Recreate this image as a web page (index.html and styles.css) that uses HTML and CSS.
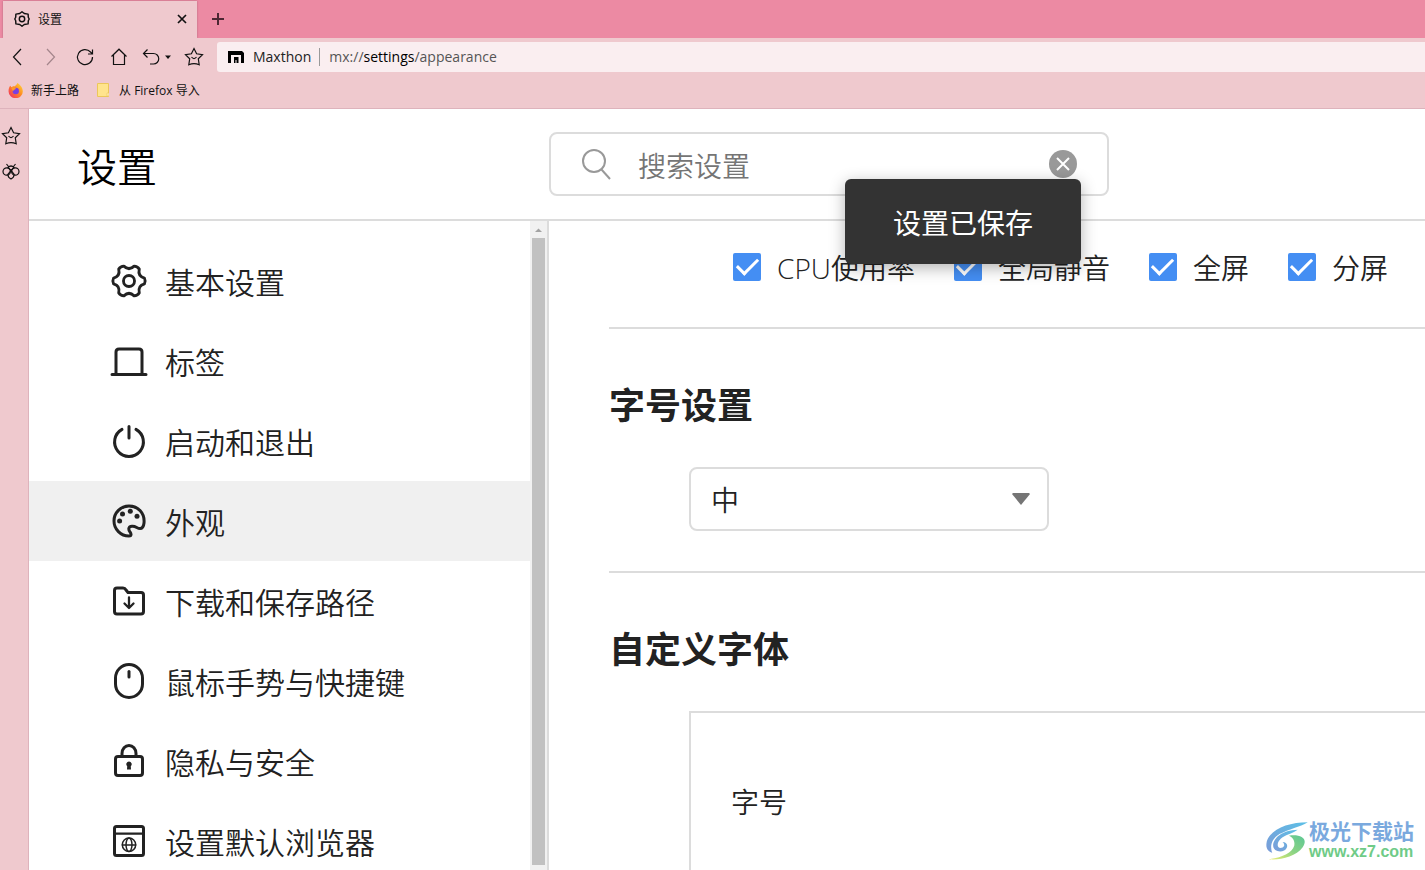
FILE: index.html
```html
<!DOCTYPE html>
<html lang="zh-CN">
<head>
<meta charset="utf-8">
<title>设置</title>
<link rel="stylesheet" href="styles.css">
</head>
<body>
<svg class="defs" width="0" height="0" aria-hidden="true">
  <symbol id="gear" viewBox="-1 -1 42 42"><path d="M36.2 16.9Q37.8 20 36.2 23.1Q29 25.2 30.8 32.5Q28.9 35.4 25.4 35.6Q20 30.4 14.6 35.6Q11.1 35.4 9.2 32.5Q11 25.2 3.8 23.1Q2.2 20 3.8 16.9Q11 14.8 9.2 7.5Q11.1 4.6 14.6 4.4Q20 9.6 25.4 4.4Q28.9 4.6 30.8 7.5Q29 14.8 36.2 16.9Z"/><circle cx="20" cy="20" r="5.8"/></symbol>
  <symbol id="star" viewBox="0 0 20 20"><path d="M10 1.5L12.6 6.8L18.5 7.7L14.3 11.8L15.2 17.7Q12.5 16.6 10 16.6Q7.500 16.600 4.800 17.700L5.700 11.800L1.500 7.700L7.400 6.800Z"/><path d="M7.500 10Q10 13.200 12.500 10"/></symbol>
</svg>

<header class="chrome">
  <div class="tabstrip">
    <div class="tab">
      <svg class="tab-icon" viewBox="0 0 20 20"><path d="M10 2L12.500 3.900L16.800 4.600L17 8L18 10L17 12L16.800 15.400L12.500 16.100L10 18L7.500 16.100L3.200 15.400L3 12L2 10L3 8L3.200 4.600L7.500 3.900Z"/><circle cx="10" cy="10" r="3"/></svg>
      <span class="tab-title">设置</span>
      <button class="plain" aria-label="关闭标签"><svg class="close" viewBox="0 0 10 10"><path d="M1 1L9 9M9 1L1 9"/></svg></button>
    </div>
    <button class="plain new-tab" aria-label="新建标签"><svg class="plus" viewBox="0 0 12 12"><path d="M6 0V12M0 6H12"/></svg></button>
  </div>
  <div class="toolbar">
    <button class="plain tool" aria-label="后退"><svg class="tool-icon" viewBox="0 0 20 20"><path d="M14 2L6.500 10L14 18"/></svg></button>
    <button class="plain tool dim" aria-label="前进"><svg class="tool-icon" viewBox="0 0 20 20"><path d="M6 2L13.500 10L6 18"/></svg></button>
    <button class="plain tool" aria-label="刷新"><svg class="tool-icon" viewBox="0 0 20 20"><path d="M17.500 10A7.500 7.500 0 1 1 15.500 5L17.500 7M17.500 2.500V7H13"/></svg></button>
    <button class="plain tool" aria-label="主页"><svg class="tool-icon" viewBox="0 0 20 20"><path d="M2.500 9.500L10 2.200L17.500 9.500M4.500 8V17.500H15.500V8"/></svg></button>
    <button class="plain tool undo" aria-label="撤销"><svg class="undo-icon" viewBox="0 0 36 20"><path d="M8.500 2.500L4.500 6.500L8.500 10.500M4.500 6.500H14.500A5.200 5.200 0 0 1 14.500 17H11"/><path class="fill" d="M26 8.500H32L29 12Z"/></svg></button>
    <button class="plain tool" aria-label="收藏"><svg class="tool-icon"><use href="#star"/></svg></button>
    <div class="address">
      <svg class="brand" viewBox="0 0 16 12"><path d="M0 0H14L16 2V12H13V4H3V12H0ZM6 6H10.500V12H8.500V9H7.500V12H6Z"/></svg>
      <span class="site">Maxthon</span>
      <span class="url">mx://<b>settings</b>/appearance</span>
    </div>
  </div>
  <nav class="bookmarks" aria-label="书签">
    <a class="bookmark" href="#start">
      <svg class="fox" viewBox="0 0 16 16">
        <defs><linearGradient id="fire" x1="1" y1="0" x2="0" y2="1"><stop offset="0" stop-color="#ffe23a"/><stop offset=".45" stop-color="#ff8a22"/><stop offset="1" stop-color="#f0246c"/></linearGradient></defs>
        <path fill="url(#fire)" d="M10 0C13 2 15.800 5 15.800 9A7.600 7.200 0 0 1 .6 9C.5 6 1.500 4 2.500 3L3.500 4.500C5 3.500 6 3.500 7.500 3.500C8.500 2 9.500 1.500 10 0Z"/>
        <circle cx="8.300" cy="8.500" r="3.400" fill="#7a3fe0"/><path fill="#ff9a28" d="M3.500 5C6 4 8 5 8.500 6.500C7 6.500 6.500 8 5 8.500Z"/>
      </svg>新手上路</a>
    <a class="bookmark folder-link" href="#import">
      <svg class="folder" viewBox="0 0 12 14"><path d="M.5.5H11.500V13.500H.5Z" fill="#ffe48d" stroke="#ecc75a"/><path d="M10 10H12V13H10Z" fill="#fff0b8" stroke="#ecc75a" stroke-width=".6"/></svg>从 Firefox 导入</a>
  </nav>
</header>

<div class="body">
  <aside class="rail">
    <button class="plain" aria-label="收藏夹"><svg class="rail-icon"><use href="#star"/></svg></button>
    <button class="plain" aria-label="扩展"><svg class="rail-icon" viewBox="0 0 20 20"><path d="M5.500 3L7.500 5.500M14.500 3L12.500 5.500M7 6.500Q10 3.500 13 6.500L10 9.500Z"/><ellipse cx="5.700" cy="10.500" rx="3.700" ry="3.700"/><ellipse cx="14.300" cy="10.500" rx="3.700" ry="3.700"/><path d="M10 9.500L6.800 13.500Q7 16.500 10 18Q13 16.500 13.200 13.500Z"/></svg></button>
  </aside>

  <div class="page">
    <header class="page-head">
      <h1 class="title">设置</h1>
      <form class="search">
        <svg class="search-icon" viewBox="0 0 32 32"><circle cx="14" cy="13" r="11"/><path d="M21.500 21.500L30 31"/></svg>
        <input class="search-input" type="text" placeholder="搜索设置" aria-label="搜索设置">
        <button class="plain" type="reset" aria-label="清除"><svg class="clear" viewBox="0 0 28 28"><circle cx="14" cy="14" r="14"/><path d="M8 8L20 20M20 8L8 20"/></svg></button>
      </form>
    </header>

    <div class="columns">
      <div class="side">
        <nav class="menu" aria-label="设置分类">
          <a class="item" href="#basic"><svg class="icon"><use href="#gear"/></svg>基本设置</a>
          <a class="item" href="#tabs"><svg class="icon" viewBox="0 0 40 40"><path d="M7 33V11Q7 8 10 8H30Q33 8 33 11V33M3 33.500H37"/></svg>标签</a>
          <a class="item" href="#launch"><svg class="icon" viewBox="0 0 40 40"><path d="M13 8.400A14.400 14.400 0 1 0 27 8.400M20 5.500V17"/></svg>启动和退出</a>
          <a class="item active" href="#appearance" aria-current="page"><svg class="icon" viewBox="0 0 40 40"><path d="M35 22C36 12 29 5 20 5A15 15 0 0 0 20 35C22.500 35 22.500 33 21 31C19 28 19.500 25.500 23 25.300C27 25 28 27.500 31 27.500C34 27.500 34.700 25 35 22Z"/><g class="fill"><circle cx="10.600" cy="20" r="2.500"/><circle cx="13.500" cy="13" r="2.500"/><circle cx="21.300" cy="10.200" r="2.500"/><circle cx="28" cy="15.300" r="2.500"/></g></svg>外观</a>
          <a class="item" href="#download"><svg class="icon" viewBox="0 0 40 40"><path d="M8 7H14Q16 7 17 9L19 11.500H32Q34.500 11.500 34.500 14V30.500Q34.500 33 32 33H8Q5.500 33 5.500 30.500V9.500Q5.500 7 8 7Z"/><path stroke-width="2.300" d="M20 16.500V26.500M15.500 22.500L20 27L24.500 22.500"/></svg>下载和保存路径</a>
          <a class="item" href="#mouse"><svg class="icon" viewBox="0 0 40 40"><rect x="6.500" y="3.500" width="27" height="33" rx="13.500"/><path d="M20 10.500V16"/></svg>鼠标手势与快捷键</a>
          <a class="item" href="#privacy"><svg class="icon" viewBox="0 0 40 40"><rect x="6.500" y="15.500" width="27" height="19" rx="2.500"/><path d="M13 15V12.500A7 8 0 0 1 27 12.500V15"/><path class="fill" d="M20 20.500A2.700 2.700 0 0 1 21.800 25.200L22 28.500H18L18.200 25.200A2.700 2.700 0 0 1 20 20.500Z"/></svg>隐私与安全</a>
          <a class="item" href="#default"><svg class="icon" viewBox="0 0 40 40"><rect x="5.500" y="5.500" width="29" height="29" rx="2"/><path stroke-width="2.200" d="M5.500 12.700H34.500"/><g stroke-width="1.500"><circle cx="20" cy="23.700" r="6.700"/><ellipse cx="20" cy="23.700" rx="3" ry="6.700"/><path d="M13.300 24H26.700"/></g></svg>设置默认浏览器</a>
        </nav>
        <div class="scrollbar" aria-hidden="true">
          <svg class="arrow" viewBox="0 0 17 17"><path d="M5 11L8.500 7.500L12 11Z"/></svg>
          <div class="thumb"></div>
        </div>
      </div>

      <main class="main">
        <section class="checks">
          <label class="check"><input class="box" type="checkbox" checked>CPU使用率</label>
          <label class="check"><input class="box" type="checkbox" checked>全局静音</label>
          <label class="check"><input class="box" type="checkbox" checked>全屏</label>
          <label class="check"><input class="box" type="checkbox" checked>分屏</label>
        </section>
        <section class="section">
          <h2 class="heading" id="size-label">字号设置</h2>
          <div class="select">
            <select class="select-box" aria-labelledby="size-label"><option>中</option></select>
            <svg class="caret" viewBox="0 0 18 12"><path d="M1 0H17L18 1L9 12L0 1Z"/></svg>
          </div>
        </section>
        <section class="section">
          <h2 class="heading">自定义字体</h2>
          <div class="panel">字号</div>
        </section>
      </main>
    </div>
  </div>
</div>

<div class="toast" role="status">设置已保存</div>

<div class="watermark">
  <svg class="swirl" viewBox="74 56 140 128">
    <defs>
      <linearGradient id="blue" x1="1" y1="0" x2="0" y2="1"><stop offset="0" stop-color="#5cc0e6"/><stop offset="1" stop-color="#7b9bd8"/></linearGradient>
      <linearGradient id="green" x1="1" y1="0" x2="0" y2="1"><stop offset="0" stop-color="#5cc795"/><stop offset=".5" stop-color="#8bd384"/><stop offset="1" stop-color="#eeee70"/></linearGradient>
    </defs>
    <path fill="url(#blue)" d="M210 60C150 60 95 80 80 120C74 145 85 153 97 158C90 140 92 115 120 98C150 82 185 75 210 60Z"/>
    <path fill="url(#blue)" d="M178 84C130 85 100 110 100 135C100 150 120 158 135 150C150 142 147 123 130 123C140 132 135 142 122 142C110 140 112 120 130 108C145 98 163 95 178 84Z"/>
    <path fill="url(#green)" d="M150 103C190 98 212 113 194 140C172 170 120 182 86 178C130 172 160 158 167 135C170 118 162 108 150 103Z"/>
  </svg>
  <div class="mark-text"><strong class="mark-name">极光下载站</strong><span class="mark-url">www.xz7.com</span></div>
</div>
</body>
</html>
```
FILE: styles.css
```css
* { box-sizing: border-box; }
body {
  margin: 0;
  height: 100vh;
  display: flex;
  flex-direction: column;
  position: relative;
  overflow: hidden;
  background: #fff;
  color: #222;
  font-family: "Open Sans", "Noto Sans CJK SC", sans-serif;
}
svg { display: block; flex: none; fill: none; stroke: currentColor; }
a { color: inherit; text-decoration: none; }
.defs { position: absolute; }
.fill { fill: currentColor; stroke: none; }
.plain { border: 0; padding: 0; background: none; color: inherit; display: flex; align-items: center; justify-content: center; }

.chrome { background: #efc9ce; border-bottom: 1px solid #deb3bc; color: #111; }
.tabstrip { display: flex; height: 38px; padding: 1px 0 0 3px; background: #ec8aa3; }
.tab {
  display: flex;
  align-items: center;
  width: 194px;
  padding: 0 10px 2px;
  background: #efc9ce;
  box-shadow: 0 0 2px #b06a7d;
  clip-path: inset(-1px -2px 0 -2px);
}
.tab-icon { width: 18px; height: 18px; stroke-width: 1.6; stroke-linejoin: round; }
.tab-title { flex: 1; padding-left: 7px; font-size: 12px; }
.close { width: 10px; height: 10px; stroke-width: 1.7; }
.new-tab { width: 42px; padding-bottom: 2px; }
.plus { width: 12px; height: 12px; stroke-width: 2; color: #4d2733; }

.toolbar { display: flex; align-items: center; height: 38px; }
.tool { width: 34px; height: 30px; }
.tool-icon { width: 20px; height: 20px; stroke-width: 1.2; }
.dim { color: #a3858b; }
.undo { width: 41px; }
.undo-icon { width: 36px; height: 20px; stroke-width: 1.2; }
.address {
  flex: 1;
  display: flex;
  align-items: center;
  height: 30px;
  margin-left: 6px;
  padding-left: 11px;
  background: #faeef0;
  border-radius: 3px 0 0 3px;
  font-size: 14px;
}
.brand { width: 16px; height: 12px; fill: #000; stroke: none; }
.site { margin-left: 9px; padding-right: 8px; border-right: 1px solid #999; line-height: 18px; color: #222; }
.url { padding-left: 9px; line-height: 18px; color: #555; }
.url b { font-weight: 400; color: #000; }

.bookmarks { display: flex; align-items: center; height: 32px; padding: 0 8px 4px; font-size: 12px; }
.bookmark { display: flex; align-items: center; gap: 8px; }
.folder-link { margin-left: 18px; gap: 10px; }
.fox { width: 15px; height: 15px; stroke: none; }
.folder { width: 12px; height: 14px; stroke: none; }

.body { flex: 1; display: flex; min-height: 0; }
.rail {
  display: flex;
  flex-direction: column;
  gap: 15px;
  width: 29px;
  padding: 17px 0 0 1px;
  background: #efc9ce;
  border-right: 1px solid #deb3bc;
  color: #111;
}
.rail .plain { width: 20px; }
.rail-icon { width: 20px; height: 20px; stroke-width: 1.2; }

.page { flex: 1; display: flex; flex-direction: column; min-width: 0; font-weight: 350; }
.page-head { display: flex; align-items: center; height: 112px; border-bottom: 2px solid #dcdcdc; }
.title { margin: 0; width: 520px; padding-left: 48px; padding-top: 6px; font-size: 40px; line-height: 56px; font-weight: 350; color: #000; }
.search {
  display: flex;
  align-items: center;
  width: 560px;
  height: 64px;
  padding: 0 30px 0 29px;
  border: 2px solid #dcdcdc;
  border-radius: 8px;
}
.search-icon { width: 32px; height: 32px; stroke: #999; stroke-width: 2; }
.search-input { flex: 1; min-width: 0; margin: 0 12px 0 26px; padding: 4px 0 0; border: 0; outline: 0; background: none; font: inherit; font-size: 28px; }
.search-input::placeholder { color: #757575; }
.clear { width: 28px; height: 28px; stroke: #fff; stroke-width: 2; }
.clear circle { fill: #999; stroke: none; }

.columns { flex: 1; display: flex; min-height: 0; }
.side { display: flex; width: 520px; border-right: 2px solid #dcdcdc; }
.menu { flex: 1; padding-top: 20px; overflow: hidden; }
.item { display: flex; align-items: center; gap: 16px; height: 80px; padding-left: 80px; font-size: 30px; }
.active { background: #f0f0f0; }
.icon { width: 40px; height: 40px; stroke-width: 3; stroke-linecap: round; stroke-linejoin: round; }
.scrollbar { display: flex; flex-direction: column; width: 17px; padding-bottom: 5px; background: #f1f1f1; }
.arrow { width: 17px; height: 17px; fill: #a3a3a3; stroke: none; }
.thumb { flex: 1; margin: 0 2px; background: #c1c1c1; }

.main { flex: 1; min-width: 0; padding-left: 60px; overflow: hidden; }
.checks { display: flex; gap: 39px; height: 108px; padding: 32px 0 46px 124px; border-bottom: 2px solid #dcdcdc; }
.check { display: flex; align-items: center; gap: 16px; height: 28px; font-size: 28px; white-space: nowrap; }
.box { appearance: none; display: grid; place-items: center; width: 28px; height: 28px; margin: 0; border-radius: 2px; background: #448ef3; }
.box::after { content: ""; width: 18px; height: 9px; margin-bottom: 6px; border: solid #fff; border-width: 0 0 3px 3px; transform: rotate(-45deg); }
.section { padding: 50px 0 40px; border-bottom: 2px solid #dcdcdc; }
.heading { margin: 0 0 34px; font-size: 36px; line-height: 54px; font-weight: 700; }
.select { display: grid; align-items: center; width: 360px; margin-left: 80px; }
.select-box, .caret { grid-area: 1 / 1; }
.select-box { appearance: none; width: 100%; height: 64px; padding: 2px 20px 0; border: 2px solid #dcdcdc; border-radius: 8px; background: #fff; color: #222; font: inherit; font-size: 28px; }
.caret { width: 18px; height: 12px; justify-self: end; margin-right: 19px; fill: #757575; stroke: none; pointer-events: none; }
.panel { height: 240px; margin-left: 80px; padding: 68px 40px; border: solid #dcdcdc; border-width: 2px 0 0 2px; font-size: 28px; line-height: 42px; }

.toast {
  position: absolute;
  left: 845px;
  top: 179px;
  padding: 23px 48px 19px;
  border-radius: 6px;
  background: #333;
  color: #fff;
  box-shadow: 0 4px 16px rgba(0, 0, 0, .3);
  font-size: 28px;
  line-height: 43px;
}
.watermark { position: absolute; right: 11px; bottom: 8px; display: flex; align-items: center; }
.swirl { width: 44px; height: 42px; stroke: none; }
.mark-text { display: flex; flex-direction: column; }
.mark-name { font-size: 21px; line-height: 22px; color: #7aa9de; }
.mark-url { font: 700 16px/20px "Liberation Sans", sans-serif; color: #6fcb87; }
```
